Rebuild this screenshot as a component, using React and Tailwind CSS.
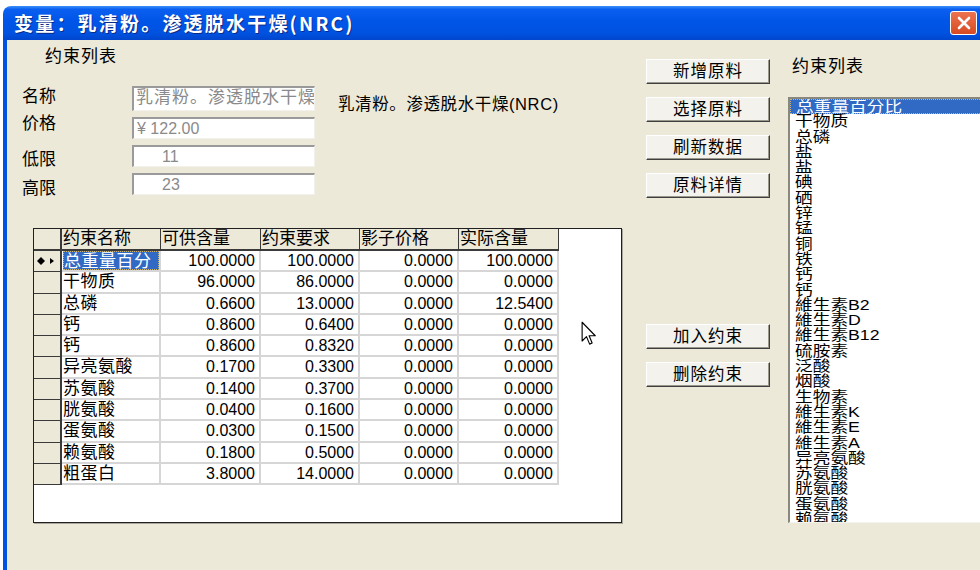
import React from "react";

const rows = [
  ["总重量百分", "100.0000", "100.0000", "0.0000", "100.0000"],
  ["干物质", "96.0000", "86.0000", "0.0000", "0.0000"],
  ["总磷", "0.6600", "13.0000", "0.0000", "12.5400"],
  ["钙", "0.8600", "0.6400", "0.0000", "0.0000"],
  ["钙", "0.8600", "0.8320", "0.0000", "0.0000"],
  ["异亮氨酸", "0.1700", "0.3300", "0.0000", "0.0000"],
  ["苏氨酸", "0.1400", "0.3700", "0.0000", "0.0000"],
  ["胱氨酸", "0.0400", "0.1600", "0.0000", "0.0000"],
  ["蛋氨酸", "0.0300", "0.1500", "0.0000", "0.0000"],
  ["赖氨酸", "0.1800", "0.5000", "0.0000", "0.0000"],
  ["粗蛋白", "3.8000", "14.0000", "0.0000", "0.0000"],
];

const headers = ["约束名称", "可供含量", "约束要求", "影子价格", "实际含量"];
const widths = ["w-[99px]", "w-[100px]", "w-[99px]", "w-[99px]", "w-[100px]"];

const listItems = [
  "总重量百分比", "干物质", "总磷", "盐", "盐", "碘", "硒", "锌", "锰", "铜", "铁", "钙", "钙",
  "維生素B2", "維生素D", "維生素B12", "硫胺素", "泛酸", "烟酸", "生物素", "維生素K", "維生素E",
  "維生素A", "异亮氨酸", "苏氨酸", "胱氨酸", "蛋氨酸", "赖氨酸",
];

function Field({ children, h }) {
  return (
    <div
      className={`w-[183px] ${h} shrink-0 bg-white border-t-2 border-l-2 border-t-[#9a9a9a] border-l-[#9a9a9a] border-b border-r border-b-[#f2f1ec] border-r-[#f2f1ec] overflow-hidden whitespace-nowrap text-[#8a8a8a] text-[16px] leading-[20px]`}
    >
      {children}
    </div>
  );
}

function Button({ label, className = "" }) {
  return (
    <div
      className={`h-[25px] w-[124px] flex items-center justify-center bg-[#f3f2ec] border-t border-l border-white border-r border-b border-r-[#3f3f3f] border-b-[#3f3f3f] shadow-[inset_-1px_-1px_0_#9a988c] text-[16.5px] tracking-[1px] text-black ${className}`}
    >
      {label}
    </div>
  );
}

export default function App() {
  return (
    <div className="relative w-[980px] h-[570px] overflow-hidden bg-white font-['Liberation_Sans','Noto_Sans_CJK_SC',sans-serif]">
      <div className="ml-[3px] mt-[6px] w-[977px] h-[564px] flex flex-col rounded-tl-[8px] overflow-hidden">
        {/* Title bar */}
        <div className="h-[34px] shrink-0 flex items-center justify-between pl-[11px] pr-[3px] bg-[linear-gradient(to_bottom,#3c8ff7,#0a5ff0_10%,#0055e8_45%,#0052e0_80%,#0046cc)]">
          <span className="text-white font-bold text-[19px] tracking-[2.2px] font-['Noto_Sans_CJK_SC',sans-serif] [text-shadow:1px_1px_0_#0a2a8a]">
            变量：乳清粉。渗透脱水干燥(NRC)
          </span>
          <div className="w-[27px] h-[24px] rounded-[3px] border border-white bg-[linear-gradient(to_bottom,#ec7450,#d84a22)] flex items-center justify-center">
            <svg width="14" height="14" viewBox="0 0 14 14">
              <path d="M2 2 L12 12 M12 2 L2 12" stroke="white" strokeWidth="2.6" strokeLinecap="round" />
            </svg>
          </div>
        </div>

        {/* Body */}
        <div className="flex-1 flex bg-[#ECE9D8] border-l-4 border-[#0052e0]">
          {/* Left column */}
          <div className="w-[615px] shrink-0 flex flex-col text-[17px] text-black">
            <div className="ml-[38px] mt-[7px] h-[20px] leading-[20px] tracking-[1px]">约束列表</div>

            <div className="flex items-start h-[25px] mt-[19px]">
              <div className="ml-[15px] w-[110px] h-[20px] mt-[1px] leading-[20px]">名称</div>
              <Field h="h-[25px]">
                <span className="pl-[2px] text-[17px] tracking-[1px]">乳清粉。渗透脱水干燥</span>
              </Field>
              <div className="ml-[23px] mt-[8px] h-[20px] leading-[20px] text-[16.5px] tracking-[0.6px]">乳清粉。渗透脱水干燥(NRC)</div>
            </div>
            <div className="flex items-start h-[22px] mt-[6px]">
              <div className="ml-[15px] w-[110px] h-[20px] -mt-[3px] leading-[20px]">价格</div>
              <Field h="h-[22px]">
                <span className="pl-[3px]">¥ 122.00</span>
              </Field>
            </div>
            <div className="flex items-start h-[22px] mt-[6px]">
              <div className="ml-[15px] w-[110px] h-[20px] mt-[5px] leading-[20px]">低限</div>
              <Field h="h-[22px]">
                <span className="pl-[28px]">11</span>
              </Field>
            </div>
            <div className="flex items-start h-[22px] mt-[6px]">
              <div className="ml-[15px] w-[110px] h-[20px] mt-[6px] leading-[20px]">高限</div>
              <Field h="h-[22px]">
                <span className="pl-[28px]">23</span>
              </Field>
            </div>

            {/* Grid */}
            <div className="ml-[26px] mt-[33px] w-[589px] h-[295px] bg-white border border-[#202020] shadow-[1px_1px_0_#a8a698]">
              <div className="flex h-[22px]">
                <div className="w-[28px] bg-[#ECE9D8] border-r-2 border-b-2 border-[#3a3a3a]" />
                {headers.map((h, i) => (
                  <div
                    key={h}
                    className={`${widths[i]} bg-[#ECE9D8] border-r border-b-2 border-[#3a3a3a] pl-[1px] leading-[20px] whitespace-nowrap`}
                  >
                    {h}
                  </div>
                ))}
              </div>
              {rows.map((r, ri) => (
                <div key={ri} className="flex h-[21.3px]">
                  <div className="w-[28px] bg-[#ECE9D8] border-r-2 border-b border-[#3a3a3a] flex items-center pl-[3px]">
                    {ri === 0 && (
                      <svg width="20" height="8" viewBox="0 0 20 8">
                        <path d="M4 0 L8 4 L4 8 L0 4 Z" fill="black" />
                        <path d="M13 1 L17 4 L13 7 Z" fill="black" />
                      </svg>
                    )}
                  </div>
                  {r.map((c, ci) => (
                    <div
                      key={ci}
                      className={`${widths[ci]} border-r-2 border-b-2 border-[#d6d6d6] leading-[19px] whitespace-nowrap overflow-hidden ${
                        ci === 0 ? "pl-[1px] tracking-[0.5px]" : "text-right pr-[4px] text-[16px]"
                      }`}
                    >
                      {ri === 0 && ci === 0 ? (
                        <div className="h-full bg-[#316AC5] text-white border border-dotted border-[#c9b57a]">{c}</div>
                      ) : (
                        c
                      )}
                    </div>
                  ))}
                </div>
              ))}
            </div>
          </div>

          {/* Buttons */}
          <div className="ml-[24px] w-[124px] shrink-0 flex flex-col">
            <Button label="新增原料" className="mt-[19px]" />
            <Button label="选择原料" className="mt-[13px]" />
            <Button label="刷新数据" className="mt-[13px]" />
            <Button label="原料详情" className="mt-[13px]" />
            <Button label="加入约束" className="mt-[126px]" />
            <Button label="删除约束" className="mt-[13px]" />
          </div>

          {/* Right list */}
          <div className="ml-[18px] flex flex-col text-[17px]">
            <div className="ml-[4px] mt-[17px] h-[20px] leading-[20px] tracking-[1px]">约束列表</div>
            <div className="mt-[20px] w-[200px] h-[426px] bg-white border-t-2 border-l-2 border-t-[#8a887c] border-l-[#8a887c] border-b border-b-[#f4f3ee] overflow-hidden">
              {listItems.map((it, i) => (
                <div
                  key={i}
                  className={`h-[15.3px] leading-[15.3px] pl-[5px] whitespace-nowrap text-[14.5px] ${
                    i === 0 ? "bg-[#316AC5] text-white border border-dotted border-[#c9b57a] pl-[4px]" : "text-black"
                  }`}
                >
                  <span className="inline-block origin-left scale-x-[1.22]">{it}</span>
                </div>
              ))}
            </div>
          </div>
        </div>
      </div>

      {/* Mouse pointer */}
      <svg className="absolute left-[579px] top-[321px]" width="20" height="25" viewBox="0 0 13 20">
        <path d="M1 1 L1 16 L4.5 12.5 L7 18.5 L9 17.6 L6.6 11.8 L11.5 11.8 Z" fill="white" stroke="black" strokeWidth="0.9" strokeLinejoin="round" />
      </svg>
    </div>
  );
}
